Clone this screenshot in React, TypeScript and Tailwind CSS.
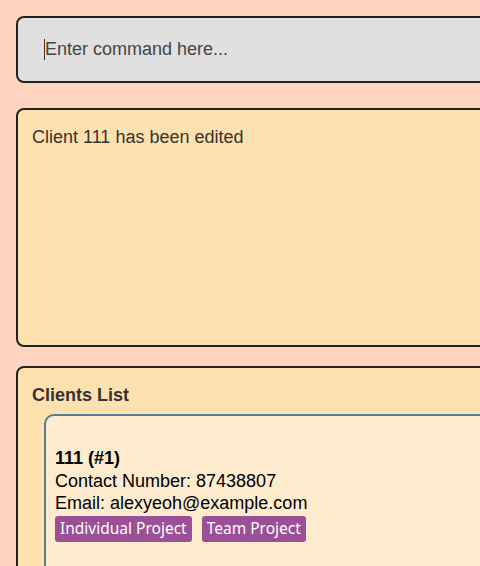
import React from 'react';

const tags = ['Individual Project', 'Team Project'];

export default function App() {
  return (
    <div className="w-[480px] h-[566px] overflow-hidden bg-[#ffd5c0] font-['Liberation_Sans',Arial,sans-serif]">
      <div className="w-[540px] pt-4 pl-4">
        {/* Command box */}
        <div className="h-[67px] rounded-lg border-2 border-[#222] bg-[#e0e0e0] flex items-center pl-[26px]">
          <span className="w-px h-[21px] bg-[#333]" />
          <input
            type="text"
            placeholder="Enter command here..."
            className="flex-1 bg-transparent outline-none text-[18px] text-[#333] placeholder:text-[#444]"
          />
        </div>

        {/* Result display */}
        <div className="mt-[25px] h-[239px] rounded-lg border-2 border-[#222] bg-[#ffe1b0] px-[14px] pt-[16px]">
          <p className="text-[18px] leading-[22px] text-[#333]">Client 111 has been edited</p>
        </div>

        {/* Clients list */}
        <div className="mt-[19px] h-[240px] rounded-lg border-2 border-[#222] bg-[#ffe1b0] pl-[14px] pt-[16px]">
          <h2 className="text-[18px] leading-[22px] font-bold text-[#333]">Clients List</h2>
          <div className="mt-[8px] ml-[12px] h-[200px] rounded-[10px] border-2 border-[#4d7f94] bg-[#feebce] pl-[9px] pt-[31px] text-black">
            <p className="text-[18px] leading-[22.5px] font-bold">111 (#1)</p>
            <p className="text-[18px] leading-[22.5px]">Contact Number: 87438807</p>
            <p className="text-[18px] leading-[22.5px]">Email: alexyeoh@example.com</p>
            <div className="flex gap-[10px] mt-px">
              {tags.map((t) => (
                <span
                  key={t}
                  className="h-[26px] flex items-center px-[5px] rounded-[3px] bg-[#9b4f96] text-white text-[15.5px] font-['Noto_Sans',sans-serif]"
                >
                  {t}
                </span>
              ))}
            </div>
          </div>
        </div>
      </div>
    </div>
  );
}
